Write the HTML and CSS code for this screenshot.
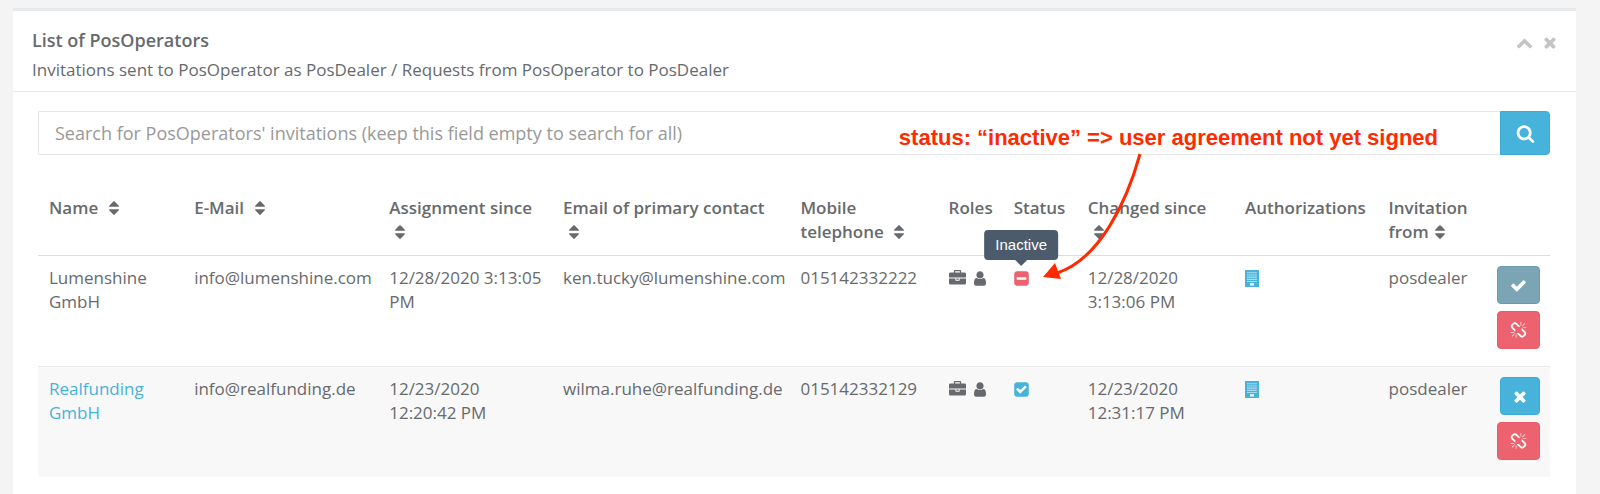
FILE: index.html
```html
<!DOCTYPE html>
<html lang="en">
<head>
<meta charset="utf-8">
<title>List of PosOperators</title>
<link rel="stylesheet" href="styles.css">
</head>
<body>
<svg class="sprite" aria-hidden="true">
  <symbol id="sort" viewBox="384 192 1024 1408"><path d="M1408 1088q0 26-19 45l-448 448q-19 19-45 19t-45-19l-448-448q-19-19-19-45t19-45 45-19h896q26 0 45 19t19 45zm0-384q0 26-19 45t-45 19h-896q-26 0-45-19t-19-45 19-45l448-448q19-19 45-19t45 19l448 448q19 19 19 45z"/></symbol>
  <symbol id="check" viewBox="0 0 1792 1792"><path d="M1671 566q0 40-28 68l-724 724-136 136q-28 28-68 28t-68-28l-136-136-362-362q-28-28-28-68t28-68l136-136q28-28 68-28t68 28l294 295 656-657q28-28 68-28t68 28l136 136q28 28 28 68z"/></symbol>
  <symbol id="times" viewBox="192 0 1408 1792"><path d="M1490 1322q0 40-28 68l-136 136q-28 28-68 28t-68-28l-294-294-294 294q-28 28-68 28t-68-28l-136-136q-28-28-28-68t28-68l294-294-294-294q-28-28-28-68t28-68l136-136q28-28 68-28t68 28l294 294 294-294q28-28 68-28t68 28l136 136q28 28 28 68t-28 68l-294 294 294 294q28 28 28 68z"/></symbol>
  <symbol id="search" viewBox="0 0 1792 1792"><path d="M1216 832q0-185-131.5-316.5t-316.5-131.5-316.5 131.5-131.5 316.5 131.5 316.5 316.5 131.5 316.5-131.5 131.5-316.5zm512 832q0 52-38 90t-90 38q-54 0-90-38l-343-342q-179 124-399 124-143 0-273.5-55.5t-225-150-150-225-55.5-273.5 55.5-273.5 150-225 225-150 273.5-55.5 273.5 55.5 225 150 150 225 55.5 273.5q0 220-124 399l343 343q37 37 37 90z"/></symbol>
  <symbol id="chevron" viewBox="0 0 1792 1792"><path d="M1683 1331l-166 165q-19 19-45 19t-45-19l-531-531-531 531q-19 19-45 19t-45-19l-166-165q-19-19-19-45.5t19-45.5l742-741q19-19 45-19t45 19l742 741q19 19 19 45.5t-19 45.5z"/></symbol>
  <symbol id="user" viewBox="256 0 1280 1792"><path d="M1536 1399q0 109-62.5 187t-150.5 78h-854q-88 0-150.5-78t-62.5-187q0-85 8.5-160.5t31.5-152 58.5-131 94-89 134.5-34.5q131 128 313 128t313-128q76 0 134.5 34.5t94 89 58.5 131 31.5 152 8.5 160.5zm-256-887q0 159-112.5 271.5t-271.5 112.5-271.5-112.5-112.5-271.5 112.5-271.5 271.5-112.5 271.5 112.5 112.5 271.5z"/></symbol>
  <symbol id="briefcase" viewBox="0 0 1792 1792"><path d="M640 256h512v-128h-512v128zm1152 640v480q0 66-47 113t-113 47h-1472q-66 0-113-47t-47-113v-480h672v160q0 26 19 45t45 19h320q26 0 45-19t19-45v-160h672zm-768 0v128h-256v-128h256zm768-480v384h-1792v-384q0-66 47-113t113-47h352v-160q0-40 28-68t68-28h576q40 0 68 28t28 68v160h352q66 0 113 47t47 113z"/></symbol>
  <symbol id="minus-square" viewBox="128 0 1536 1792"><path d="M1408 960v-128q0-26-19-45t-45-19h-896q-26 0-45 19t-19 45v128q0 26 19 45t45 19h896q26 0 45-19t19-45zm256-544v960q0 119-84.5 203.5t-203.5 84.5h-960q-119 0-203.5-84.5t-84.5-203.5v-960q0-119 84.5-203.5t203.5-84.5h960q119 0 203.5 84.5t84.5 203.5z"/></symbol>
  <symbol id="check-square" viewBox="128 0 1536 1792"><path d="M813 1299l614-614q19-19 19-45t-19-45l-102-102q-19-19-45-19t-45 19l-467 467-211-211q-19-19-45-19t-45 19l-102 102q-19 19-19 45t19 45l358 358q19 19 45 19t45-19zm851-883v960q0 119-84.5 203.5t-203.5 84.5h-960q-119 0-203.5-84.5t-84.5-203.5v-960q0-119 84.5-203.5t203.5-84.5h960q119 0 203.5 84.5t84.5 203.5z"/></symbol>
  <symbol id="building" viewBox="0 0 14 17"><path fill-rule="evenodd" d="M.5 0h13q.5 0 .5.5v16q0 .5-.5.5H.5q-.5 0-.5-.5V.5Q0 0 .5 0zM5 13.3v2.2h4v-2.2zM2.4 2.2v1.1h1.1v-1.1zM4.4 2.2v1.1h1.1v-1.1zM6.4 2.2v1.1h1.1v-1.1zM8.400 2.200v1.100h1.100v-1.100zM10.400 2.200v1.100h1.100v-1.100zM2.400 4.400v1.100h1.100v-1.100zM4.400 4.400v1.100h1.100v-1.100zM6.400 4.400v1.100h1.100v-1.100zM8.400 4.400v1.100h1.100v-1.100zM10.400 4.400v1.100h1.100v-1.100zM2.400 6.600v1.100h1.100v-1.100zM4.400 6.600v1.100h1.100v-1.100zM6.400 6.600v1.100h1.100v-1.100zM8.400 6.600v1.100h1.100v-1.100zM10.400 6.600v1.100h1.100v-1.100zM2.400 8.800v1.100h1.100v-1.100zM4.400 8.800v1.100h1.100v-1.100zM6.400 8.800v1.100h1.100v-1.100zM8.400 8.800v1.100h1.100v-1.100zM10.400 8.800v1.100h1.100v-1.100zM2.400 11v1.100h1.100v-1.100zM4.400 11v1.100h1.100v-1.100zM6.400 11v1.100h1.100v-1.100zM8.400 11v1.100h1.100v-1.100zM10.400 11v1.100h1.100v-1.100z"/></symbol>
  <symbol id="unlink" viewBox="0 0 1792 1792"><path d="M503 1271l-256 256q-10 9-23 9-12 0-23-9-9-10-9-23t9-23l256-256q10-9 23-9t23 9q9 10 9 23t-9 23zm169 41v320q0 14-9 23t-23 9-23-9-9-23v-320q0-14 9-23t23-9 23 9 9 23zm-224-224q0 14-9 23t-23 9h-320q-14 0-23-9t-9-23 9-23 23-9h320q14 0 23 9t9 23zm1264 128q0 120-85 203l-147 146q-83 83-203 83-121 0-204-85l-334-335q-21-21-42-56l239-18 273 274q28 28 68 27.5t68-27.5l147-146q28-28 28-67 0-40-28-68l-274-275 18-239q35 21 56 42l336 336q84 86 84 204zm-617-724l-239 18-273-274q-28-28-68-28-39 0-68 27l-147 146q-28 28-28 67 0 40 28 68l274 274-18 240q-35-21-56-42l-336-336q-84-86-84-204 0-120 85-203l147-146q83-83 203-83 121 0 204 85l334 335q21 21 42 56zm633 84q0 14-9 23t-23 9h-320q-14 0-23-9t-9-23 9-23 23-9h320q14 0 23 9t9 23zm-544-544v320q0 14-9 23t-23 9-23-9-9-23v-320q0-14 9-23t23-9 23 9 9 23zm407 151l-256 256q-11 9-23 9t-23-9q-9-10-9-23t9-23l256-256q10-9 23-9t23 9q9 10 9 23t-9 23z"/></symbol>
</svg>

<main class="panel">
  <header class="panel-head">
    <div>
      <h1 class="title">List of PosOperators</h1>
      <p class="subtitle">Invitations sent to PosOperator as PosDealer / Requests from PosOperator to PosDealer</p>
    </div>
    <div class="tools">
      <button class="tool" type="button" aria-label="Collapse"><svg class="icon"><use href="#chevron"/></svg></button>
      <button class="tool" type="button" aria-label="Close"><svg class="icon narrow"><use href="#times"/></svg></button>
    </div>
  </header>

  <div class="panel-body">
    <form class="search">
      <input class="search-input" type="text" aria-label="Search invitations" placeholder="Search for PosOperators' invitations (keep this field empty to search for all)">
      <button class="search-btn" type="button" aria-label="Search"><svg class="icon large"><use href="#search"/></svg></button>
    </form>

    <table class="grid">
      <colgroup>
        <col class="c-name"><col class="c-mail"><col class="c-assigned"><col class="c-contact"><col class="c-phone"><col class="c-roles"><col class="c-status"><col class="c-changed"><col class="c-auth"><col class="c-from"><col class="c-actions">
      </colgroup>
      <thead>
        <tr>
          <th>Name <svg class="sort"><use href="#sort"/></svg></th>
          <th>E-Mail <svg class="sort"><use href="#sort"/></svg></th>
          <th>Assignment since <svg class="sort"><use href="#sort"/></svg></th>
          <th>Email of primary contact <svg class="sort"><use href="#sort"/></svg></th>
          <th>Mobile telephone <svg class="sort"><use href="#sort"/></svg></th>
          <th>Roles</th>
          <th>Status</th>
          <th>Changed since <svg class="sort"><use href="#sort"/></svg></th>
          <th>Authorizations</th>
          <th>Invitation from <svg class="sort tight"><use href="#sort"/></svg></th>
          <th></th>
        </tr>
      </thead>
      <tbody>
        <tr>
          <td>Lumenshine GmbH</td>
          <td>info@lumenshine.com</td>
          <td>12/28/2020 3:13:05 PM</td>
          <td>ken.tucky@lumenshine.com</td>
          <td>015142332222</td>
          <td><div class="icons"><svg class="icon"><use href="#briefcase"/></svg><svg class="icon person"><use href="#user"/></svg></div></td>
          <td><div class="icons"><span class="status inactive"><svg class="icon square"><use href="#minus-square"/></svg><span class="tooltip" role="tooltip">Inactive</span></span></div></td>
          <td>12/28/2020 3:13:06 PM</td>
          <td><div class="icons"><svg class="icon building"><use href="#building"/></svg></div></td>
          <td>posdealer</td>
          <td>
            <div class="actions">
              <button class="btn muted" type="button" aria-label="Accept"><svg class="icon"><use href="#check"/></svg></button>
              <button class="btn danger" type="button" aria-label="Unlink"><svg class="icon"><use href="#unlink"/></svg></button>
            </div>
          </td>
        </tr>
        <tr class="alt">
          <td><a class="link" href="#">Realfunding GmbH</a></td>
          <td>info@realfunding.de</td>
          <td>12/23/2020 12:20:42 PM</td>
          <td>wilma.ruhe@realfunding.de</td>
          <td>015142332129</td>
          <td><div class="icons"><svg class="icon"><use href="#briefcase"/></svg><svg class="icon person"><use href="#user"/></svg></div></td>
          <td><div class="icons"><span class="status active"><svg class="icon square"><use href="#check-square"/></svg></span></div></td>
          <td>12/23/2020 12:31:17 PM</td>
          <td><div class="icons"><svg class="icon building"><use href="#building"/></svg></div></td>
          <td>posdealer</td>
          <td>
            <div class="actions">
              <button class="btn info" type="button" aria-label="Reject"><svg class="icon narrow"><use href="#times"/></svg></button>
              <button class="btn danger" type="button" aria-label="Unlink"><svg class="icon"><use href="#unlink"/></svg></button>
            </div>
          </td>
        </tr>
      </tbody>
    </table>

    <div class="note">
      <span class="note-text">status: “inactive” =&gt; user agreement not yet signed</span>
      <svg class="note-arrow" viewBox="0 0 100 128"><path class="shaft" d="M97 2C84 49 57 107 14 121"/><path class="head" d="M0 125l12-14 6 16z"/></svg>
    </div>
  </div>
</main>
</body>
</html>
```
FILE: styles.css
```css
* { box-sizing: border-box; }

body {
  margin: 0;
  padding: 8px 24px 0 13px;
  background: #f4f4f4;
  color: #676a6c;
  font: 17px/24px "Open Sans", "Noto Sans", sans-serif;
}

button { font: inherit; cursor: pointer; }
.sprite { position: absolute; width: 0; height: 0; }

.icon { display: block; width: 17px; height: 17px; fill: currentColor; }
.icon.narrow { width: 14px; }
.icon.large { width: 19px; height: 19px; }
.icon.person { width: 12px; }
.icon.square { width: 15px; }
.icon.building { width: 14px; color: #47b2da; }

.panel {
  min-height: calc(100vh - 8px);
  background: #fff;
  border-top: 3px solid #e7eaec;
}

.panel-head {
  display: flex;
  justify-content: space-between;
  padding: 17px 19px 9px;
  border-bottom: 1px solid #e7eaec;
}

.title { margin: 0 0 6px; font-size: 18px; line-height: 24px; font-weight: 600; }
.subtitle { margin: 0; }
.tools { display: flex; align-items: flex-start; gap: 10px; padding-top: 6px; }
.tool { padding: 0; border: 0; background: none; color: #c4c4c4; }

.panel-body { position: relative; padding: 19px 26px 18px 25px; }

.search { display: flex; height: 44px; }
.search-input {
  flex: 1;
  min-width: 0;
  padding: 0 16px;
  border: 1px solid #e5e6e7;
  border-right: 0;
  border-radius: 2px 0 0 2px;
  background: #fff;
  color: inherit;
  font: 18px/24px "Open Sans", "Noto Sans", sans-serif;
}
.search-input::placeholder { color: #999; opacity: 1; }
.search-btn {
  display: grid;
  place-items: center;
  width: 50px;
  padding: 0;
  border: 1px solid #3aacd6;
  border-radius: 0 4px 4px 0;
  background: #47b2da;
  color: #fff;
}

.grid {
  width: 100%;
  margin-top: 31px;
  border-collapse: separate;
  border-spacing: 0;
  table-layout: fixed;
}
.grid th, .grid td {
  padding: 10px 10px 10px 11px;
  text-align: left;
  vertical-align: top;
}
.grid th { padding-bottom: 11px; font-weight: 600; }
.grid td { border-top: 1px solid #e7eaec; }
.grid tbody tr:first-child td { border-top-color: #ddd; }
.alt { background: #f8f8f8; }

.c-name { width: 9.6%; }
.c-mail { width: 12.9%; }
.c-assigned { width: 11.5%; }
.c-contact { width: 15.7%; }
.c-phone { width: 9.8%; }
.c-roles { width: 4.3%; }
.c-status { width: 4.9%; }
.c-changed { width: 10.4%; }
.c-auth { width: 9.5%; }
.c-from { width: 6.9%; }
.c-actions { width: 4.5%; }

.sort { width: 10px; height: 14px; margin-left: 6px; fill: currentColor; vertical-align: -1px; }
.sort.tight { margin-left: 2px; }
.link { color: #47b2da; text-decoration: none; }

.icons { display: flex; align-items: center; gap: 8px; height: 24px; }
.status { position: relative; }
.inactive { color: #ec626f; }
.active { color: #47b2da; }

.tooltip {
  position: absolute;
  bottom: calc(100% + 10px);
  left: 50%;
  transform: translateX(-50%);
  padding: 3px 11px;
  border-radius: 4px;
  background: #4b5b6c;
  color: #fff;
  font: 15px/24px "Liberation Sans", Arial, sans-serif;
}
.tooltip::after {
  content: "";
  position: absolute;
  top: 100%;
  left: 50%;
  margin-left: -6px;
  border: 6px solid transparent;
  border-top-color: #4b5b6c;
  border-bottom: 0;
}

.actions { display: flex; flex-direction: column; align-items: flex-end; }
.btn {
  padding: 10px 12px 9px;
  margin-bottom: 7px;
  border: 1px solid;
  border-radius: 4px;
  color: #fff;
}
.btn.muted { background: #7ba5b5; border-color: #6b9bac; }
.btn.danger { background: #ec626f; border-color: #eb5a68; }
.btn.info { background: #47b2da; border-color: #3aacd6; }

/* Callout lying over the search box and the table */
.note {
  position: absolute;
  top: 34px;
  right: 138px;
  color: #ff2a00;
  font: bold 22px/24px "Liberation Sans", Arial, sans-serif;
  white-space: nowrap;
  pointer-events: none;
}
.note-arrow { position: absolute; top: 26px; left: 144px; left: calc(100% - 395px); width: 100px; height: 128px; }
.shaft { fill: none; stroke: currentColor; stroke-width: 3; }
.head { fill: currentColor; }
```
